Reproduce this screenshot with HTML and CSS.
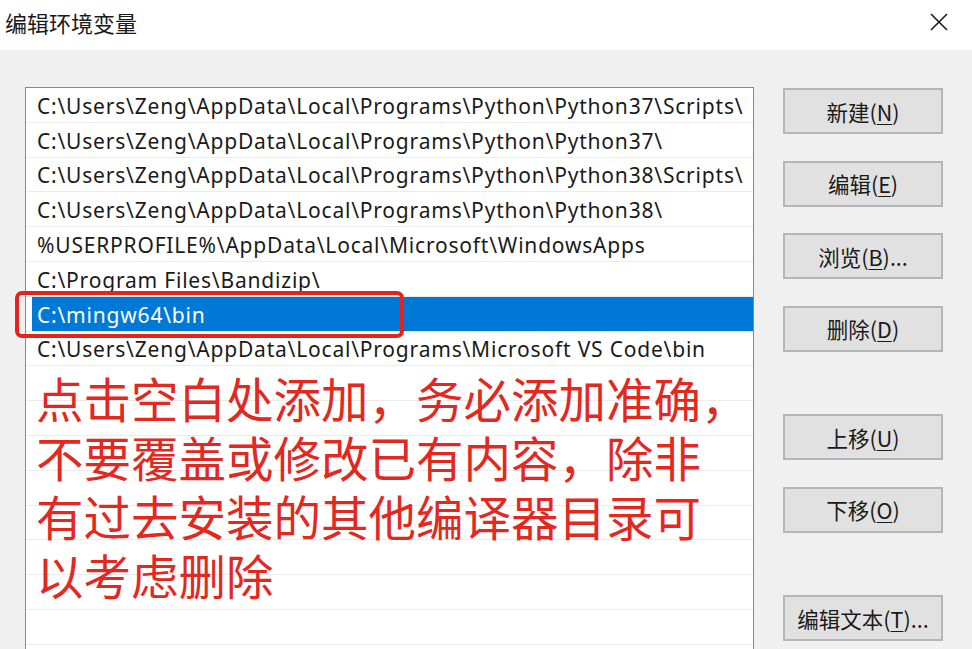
FILE: index.html
```html
<!DOCTYPE html>
<html lang="zh-CN">
<head>
<meta charset="utf-8">
<title>编辑环境变量</title>
<link rel="stylesheet" href="styles.css">
</head>
<body>
<div class="dialog">
  <div class="titlebar">
    <span class="title">编辑环境变量</span>
    <span class="close" aria-label="关闭">
      <svg width="18" height="18" viewBox="0 0 18 18"><path d="M1 1 L17 17 M17 1 L1 17" stroke="#1a1a1a" stroke-width="1.6" fill="none"/></svg>
    </span>
  </div>
  <div class="content">
    <div class="listwrap">
      <div class="list">
        <div class="row"><span class="cell">C:\Users\Zeng\AppData\Local\Programs\Python\Python37\Scripts\</span></div>
        <div class="row"><span class="cell">C:\Users\Zeng\AppData\Local\Programs\Python\Python37\</span></div>
        <div class="row"><span class="cell">C:\Users\Zeng\AppData\Local\Programs\Python\Python38\Scripts\</span></div>
        <div class="row"><span class="cell">C:\Users\Zeng\AppData\Local\Programs\Python\Python38\</span></div>
        <div class="row"><span class="cell">%USERPROFILE%\AppData\Local\Microsoft\WindowsApps</span></div>
        <div class="row"><span class="cell">C:\Program Files\Bandizip\</span></div>
        <div class="row"><span class="cell selected">C:\mingw64\bin</span></div>
        <div class="row"><span class="cell">C:\Users\Zeng\AppData\Local\Programs\Microsoft VS Code\bin</span></div>
        <div class="row"><span class="cell"></span></div>
        <div class="row"><span class="cell"></span></div>
        <div class="row"><span class="cell"></span></div>
        <div class="row"><span class="cell"></span></div>
        <div class="row"><span class="cell"></span></div>
        <div class="row"><span class="cell"></span></div>
        <div class="row"><span class="cell"></span></div>
        <div class="row"><span class="cell"></span></div>
      </div>
      <div class="markbox"></div>
      <div class="note">点击空白处添加，务必添加准确，<br>不要覆盖或修改已有内容，除非<br>有过去安装的其他编译器目录可<br>以考虑删除</div>
    </div>
    <div class="buttons">
      <button class="btn">新建(<u>N</u>)</button>
      <button class="btn">编辑(<u>E</u>)</button>
      <button class="btn">浏览(<u>B</u>)...</button>
      <button class="btn">删除(<u>D</u>)</button>
      <button class="btn gap">上移(<u>U</u>)</button>
      <button class="btn">下移(<u>O</u>)</button>
      <button class="btn gap">编辑文本(<u>T</u>)...</button>
    </div>
  </div>
</div>
</body>
</html>
```

FILE: styles.css
```css
html, body {
  margin: 0;
  padding: 0;
  width: 972px;
  height: 649px;
  overflow: hidden;
  background: #f0f0f0;
  font-family: "Noto Sans", "Noto Sans CJK SC", sans-serif;
}

.dialog {
  width: 972px;
  height: 649px;
  display: flex;
  flex-direction: column;
  overflow: hidden;
}

.titlebar {
  height: 50px;
  background: #ffffff;
  display: flex;
  align-items: center;
  justify-content: space-between;
  padding: 0 24px 6px 5px;
  box-sizing: border-box;
  flex: none;
}

.title {
  font-family: "Noto Sans CJK SC", sans-serif;
  font-size: 22px;
  color: #1a1a1a;
}

.close {
  display: flex;
  width: 18px;
  height: 18px;
}

.content {
  flex: 1;
  display: flex;
  padding: 37px 0 0 25px;
  min-height: 0;
  overflow: hidden;
}

.listwrap {
  position: relative;
  width: 729px;
  flex: none;
}

.list {
  width: 729px;
  height: 562px;
  box-sizing: border-box;
  border: 1px solid #828790;
  border-bottom: none;
  background: #ffffff;
  overflow: hidden;
}

.row {
  height: 34.8px;
  box-sizing: border-box;
  border-bottom: 1px solid #ececec;
  display: flex;
  align-items: stretch;
}

.cell {
  flex: 1;
  margin-left: 6px;
  padding: 2px 0 0 5px;
  display: flex;
  align-items: center;
  font-size: 21px;
  letter-spacing: 0.8px;
  color: #1a1a1a;
  white-space: nowrap;
}

.cell.selected {
  background: #0078d7;
  color: #ffffff;
}

.markbox {
  position: absolute;
  left: -10px;
  top: 204px;
  width: 389px;
  height: 47px;
  box-sizing: border-box;
  border: 4px solid #e3241c;
  border-radius: 7px;
}

.note {
  position: absolute;
  left: 11px;
  top: 281px;
  font-family: "Noto Sans CJK SC", sans-serif;
  font-size: 47.5px;
  line-height: 59px;
  color: #e3281f;
  white-space: nowrap;
}

.buttons {
  margin-left: 29px;
  width: 160px;
  display: flex;
  flex-direction: column;
  gap: 26.5px;
  padding-top: 1px;
}

.btn {
  width: 160px;
  height: 46px;
  flex: none;
  background: #e1e1e1;
  border: 2px solid #b5b5b5;
  box-sizing: border-box;
  font-family: "Noto Sans CJK SC", sans-serif;
  font-size: 21.5px;
  color: #1a1a1a;
  padding: 0;
  display: flex;
  align-items: center;
  justify-content: center;
}

.btn u {
  text-decoration-thickness: 1px;
  text-underline-offset: 3px;
}

.btn.gap {
  margin-top: 36px;
}
```
